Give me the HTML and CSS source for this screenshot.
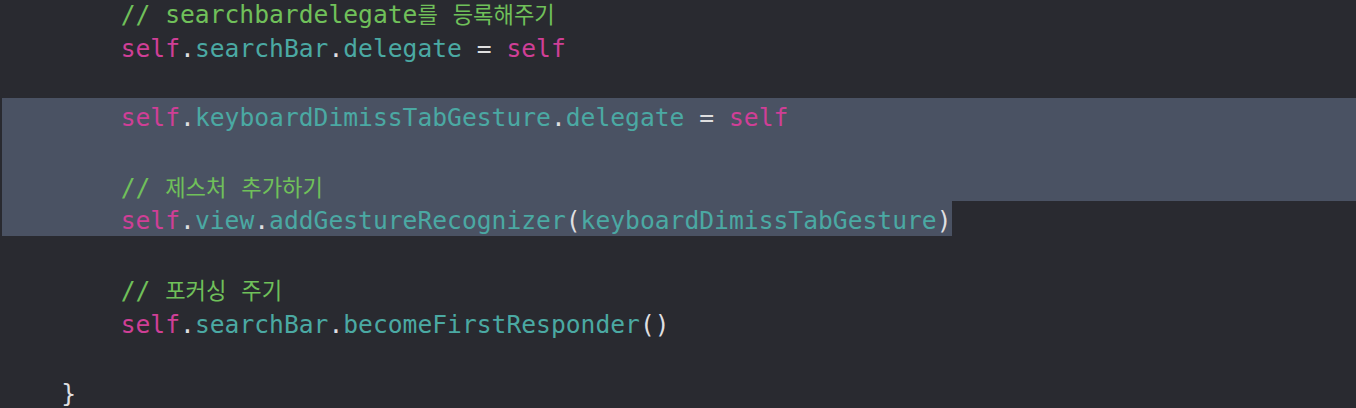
FILE: index.html
```html
<!DOCTYPE html>
<html lang="ko">
<head>
<meta charset="utf-8">
<title>Editor</title>
<link rel="stylesheet" href="styles.css">
</head>
<body>
<div class="editor">
<div class="line">        <span class="cm">// searchbardelegate<span class="ko">를</span> <span class="ko">등록해주기</span></span></div>
<div class="line">        <span class="kw">self</span>.<span class="id">searchBar</span>.<span class="id">delegate</span> = <span class="kw">self</span></div>
<div class="line"> </div>
<div class="line sel">        <span class="kw">self</span>.<span class="id">keyboardDimissTabGesture</span>.<span class="id">delegate</span> = <span class="kw">self</span></div>
<div class="line sel"> </div>
<div class="line sel">        <span class="cm">// <span class="ko">제스처</span> <span class="ko">추가하기</span></span></div>
<div class="line sel part">        <span class="kw">self</span>.<span class="id">view</span>.<span class="id">addGestureRecognizer</span>(<span class="id">keyboardDimissTabGesture</span>)</div>
<div class="line"> </div>
<div class="line">        <span class="cm">// <span class="ko">포커싱</span> <span class="ko">주기</span></span></div>
<div class="line">        <span class="kw">self</span>.<span class="id">searchBar</span>.<span class="id">becomeFirstResponder</span>()</div>
<div class="line"> </div>
<div class="line">    }</div>
</div>
</body>
</html>
```
FILE: styles.css
```css
html, body {
  margin: 0;
  padding: 0;
  background: #292a30;
  overflow: hidden;
}

.editor {
  margin-top: -6px;
  padding-left: 2px;
  font-family: "DejaVu Sans Mono", "Liberation Mono", monospace;
  font-size: 24.65px;
  color: #dfdfe0;
}

.line {
  box-sizing: border-box;
  height: 34.5px;
  padding-top: 5px;
  line-height: 29.5px;
  white-space: pre;
}

.sel {
  background: #4a5263;
}

.part {
  width: max-content;
}

.kw {
  color: #cf3f96;
}

.id {
  color: #4ba9a3;
}

.cm {
  color: #70c05a;
}

.ko {
  font-family: "Noto Sans CJK KR", "Noto Sans", sans-serif;
  font-size: 22.2px;
}
```
